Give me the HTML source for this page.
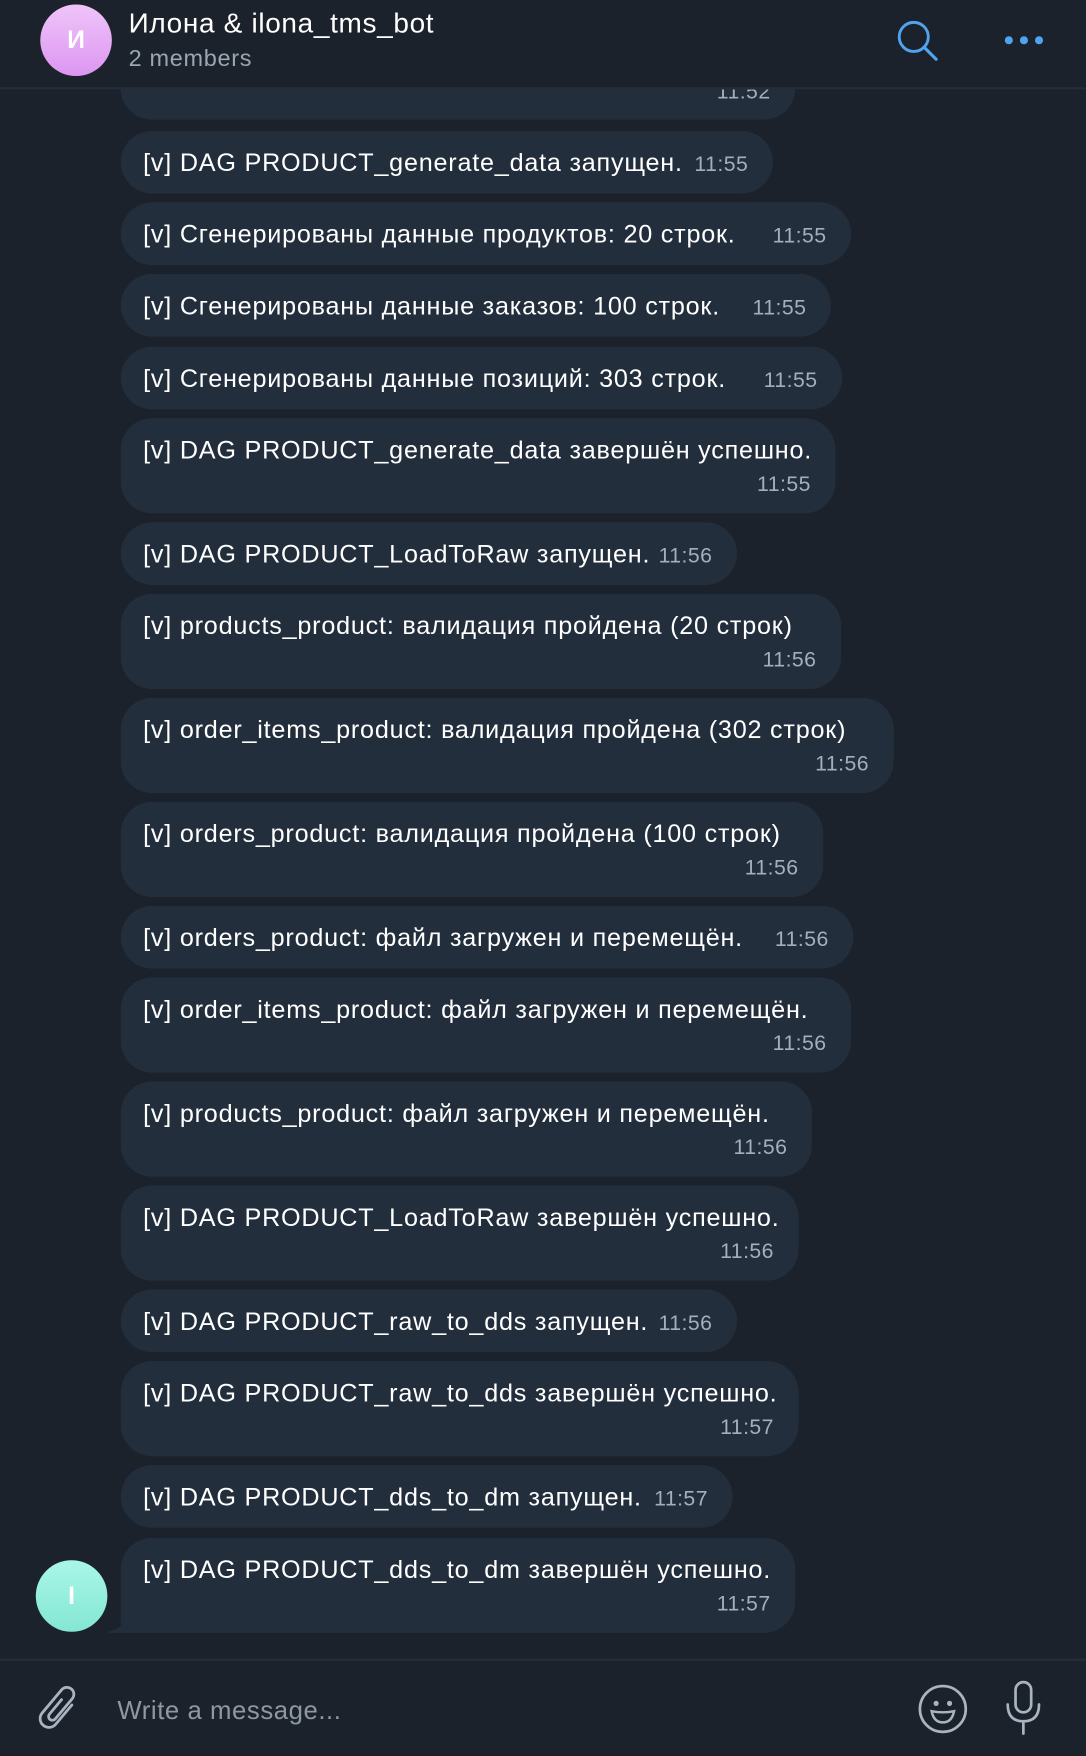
<!DOCTYPE html>
<html><head><meta charset="utf-8"><style>
html,body{margin:0;padding:0;width:1086px;height:1754px;overflow:hidden;background:#1c222b;}
#w{position:absolute;left:0;top:0;width:971px;height:1568px;transform:scale(1.11843);transform-origin:0 0;font-family:"Liberation Sans","DejaVu Sans",sans-serif;}
.hdr{position:absolute;left:0;top:0;width:971px;height:78px;background:#1c222b;border-bottom:2px solid #252d38;z-index:2;}
.av{position:absolute;border-radius:50%;color:#fff;font-weight:bold;text-align:center;}
.b{position:absolute;left:108px;background:#232e3d;border-radius:28px;color:#fff;font-size:22.5px;letter-spacing:0.7px;}
.b .t{position:absolute;left:20px;top:16px;white-space:nowrap;}
.b .tm{position:absolute;right:22px;color:#a3afbc;font-size:19px;letter-spacing:0.4px;}
.s{height:56px}.s .tm{top:20px}
.d{height:85px}.d .tm{top:49px}
.bar{position:absolute;left:0;top:1483px;width:971px;height:85px;border-top:2px solid #252d38;background:#1c222b;}
</style></head><body><div id="w">
<div class="hdr">
<div class="av" style="left:36px;top:4px;width:64px;height:64px;line-height:64px;font-size:22px;background:linear-gradient(#efc4f9,#dc96f1);">И</div>
<div style="position:absolute;left:115px;top:7px;color:#fff;font-size:25px;letter-spacing:0.6px;">Илона &amp; ilona_tms_bot</div>
<div style="position:absolute;left:115px;top:41px;color:#9aa6b3;font-size:21px;letter-spacing:0.6px;">2 members</div>
<svg style="position:absolute;left:800px;top:16px" width="42" height="42" viewBox="0 0 42 42"><circle cx="17" cy="17" r="13" fill="none" stroke="#4ea4f0" stroke-width="2.6"/><line x1="26.5" y1="26.5" x2="37" y2="37" stroke="#4ea4f0" stroke-width="2.8" stroke-linecap="round"/></svg>
<svg style="position:absolute;left:896px;top:29px" width="40" height="14"><circle cx="6" cy="7" r="3.6" fill="#4ea4f0"/><circle cx="19.5" cy="7" r="3.6" fill="#4ea4f0"/><circle cx="33" cy="7" r="3.6" fill="#4ea4f0"/></svg>
</div>

<div class="b" style="top:50px;height:57px;width:603px;"><span class="tm" style="top:22px">11:52</span></div>
<div class="b s" style="top:117px;width:583px"><span class="t">[v] DAG PRODUCT_generate_data запущен.</span><span class="tm">11:55</span></div>
<div class="b s" style="top:181px;width:653px"><span class="t">[v] Сгенерированы данные продуктов: 20 строк.</span><span class="tm">11:55</span></div>
<div class="b s" style="top:245px;width:635px"><span class="t">[v] Сгенерированы данные заказов: 100 строк.</span><span class="tm">11:55</span></div>
<div class="b s" style="top:310px;width:645px"><span class="t">[v] Сгенерированы данные позиций: 303 строк.</span><span class="tm">11:55</span></div>
<div class="b d" style="top:374px;width:639px"><span class="t">[v] DAG PRODUCT_generate_data завершён успешно.</span><span class="tm">11:55</span></div>
<div class="b s" style="top:467px;width:551px"><span class="t">[v] DAG PRODUCT_LoadToRaw запущен.</span><span class="tm">11:56</span></div>
<div class="b d" style="top:531px;width:644px"><span class="t">[v] products_product: валидация пройдена (20 строк)</span><span class="tm">11:56</span></div>
<div class="b d" style="top:624px;width:691px"><span class="t">[v] order_items_product: валидация пройдена (302 строк)</span><span class="tm">11:56</span></div>
<div class="b d" style="top:717px;width:628px"><span class="t">[v] orders_product: валидация пройдена (100 строк)</span><span class="tm">11:56</span></div>
<div class="b s" style="top:810px;width:655px"><span class="t">[v] orders_product: файл загружен и перемещён.</span><span class="tm">11:56</span></div>
<div class="b d" style="top:874px;width:653px"><span class="t">[v] order_items_product: файл загружен и перемещён.</span><span class="tm">11:56</span></div>
<div class="b d" style="top:967px;width:618px"><span class="t">[v] products_product: файл загружен и перемещён.</span><span class="tm">11:56</span></div>
<div class="b d" style="top:1060px;width:606px"><span class="t">[v] DAG PRODUCT_LoadToRaw завершён успешно.</span><span class="tm">11:56</span></div>
<div class="b s" style="top:1153px;width:551px"><span class="t">[v] DAG PRODUCT_raw_to_dds запущен.</span><span class="tm">11:56</span></div>
<div class="b d" style="top:1217px;width:606px"><span class="t">[v] DAG PRODUCT_raw_to_dds завершён успешно.</span><span class="tm">11:57</span></div>
<div class="b s" style="top:1310px;width:547px"><span class="t">[v] DAG PRODUCT_dds_to_dm запущен.</span><span class="tm">11:57</span></div>
<svg style="position:absolute;left:94px;top:1425px" width="40" height="36"><path d="M40 0 L20 0 L20 20 Q18 30 3 34 Q2 35 5 35 L40 35 Z" fill="#232e3d"/></svg>
<div class="b d" style="top:1375px;width:603px;border-bottom-left-radius:10px"><span class="t">[v] DAG PRODUCT_dds_to_dm завершён успешно.</span><span class="tm">11:57</span></div>
<div class="av" style="left:32px;top:1395px;width:64px;height:64px;line-height:64px;font-size:22px;background:linear-gradient(#a9f6e8,#84e7d3);">I</div>

<div class="bar">
<svg style="position:absolute;left:24px;top:16px" width="54" height="54" viewBox="0 0 48 48"><g transform="rotate(40 24 24)"><path d="M31 14 V34 A7 7 0 0 1 17 34 V10 A5.5 5.5 0 0 1 28 10 V31 A3 3 0 0 1 22 31 V16" fill="none" stroke="#a9b4c0" stroke-width="2.2" stroke-linecap="round"/></g></svg>
<div style="position:absolute;left:105px;top:31px;color:#8d98a4;font-size:23px;letter-spacing:0.5px;">Write a message...</div>
<svg style="position:absolute;left:820px;top:20px" width="46" height="46" viewBox="0 0 46 46"><circle cx="23" cy="23" r="20.5" fill="none" stroke="#a9b4c0" stroke-width="2.4"/><circle cx="17" cy="18" r="2.3" fill="#a9b4c0"/><circle cx="29" cy="18" r="2.3" fill="#a9b4c0"/><path d="M13 25 Q23 27 33 25 Q31 35 23 35 Q15 35 13 25 Z" fill="none" stroke="#a9b4c0" stroke-width="2.2"/></svg>
<svg style="position:absolute;left:897px;top:17px" width="36" height="50" viewBox="0 0 36 50"><rect x="11" y="2" width="14" height="27" rx="7" fill="none" stroke="#a9b4c0" stroke-width="2.4"/><path d="M4 22 Q4 37 18 37 Q32 37 32 22 M18 37 L18 48" fill="none" stroke="#a9b4c0" stroke-width="2.4" stroke-linecap="round"/></svg>
</div>
</div></body></html>
